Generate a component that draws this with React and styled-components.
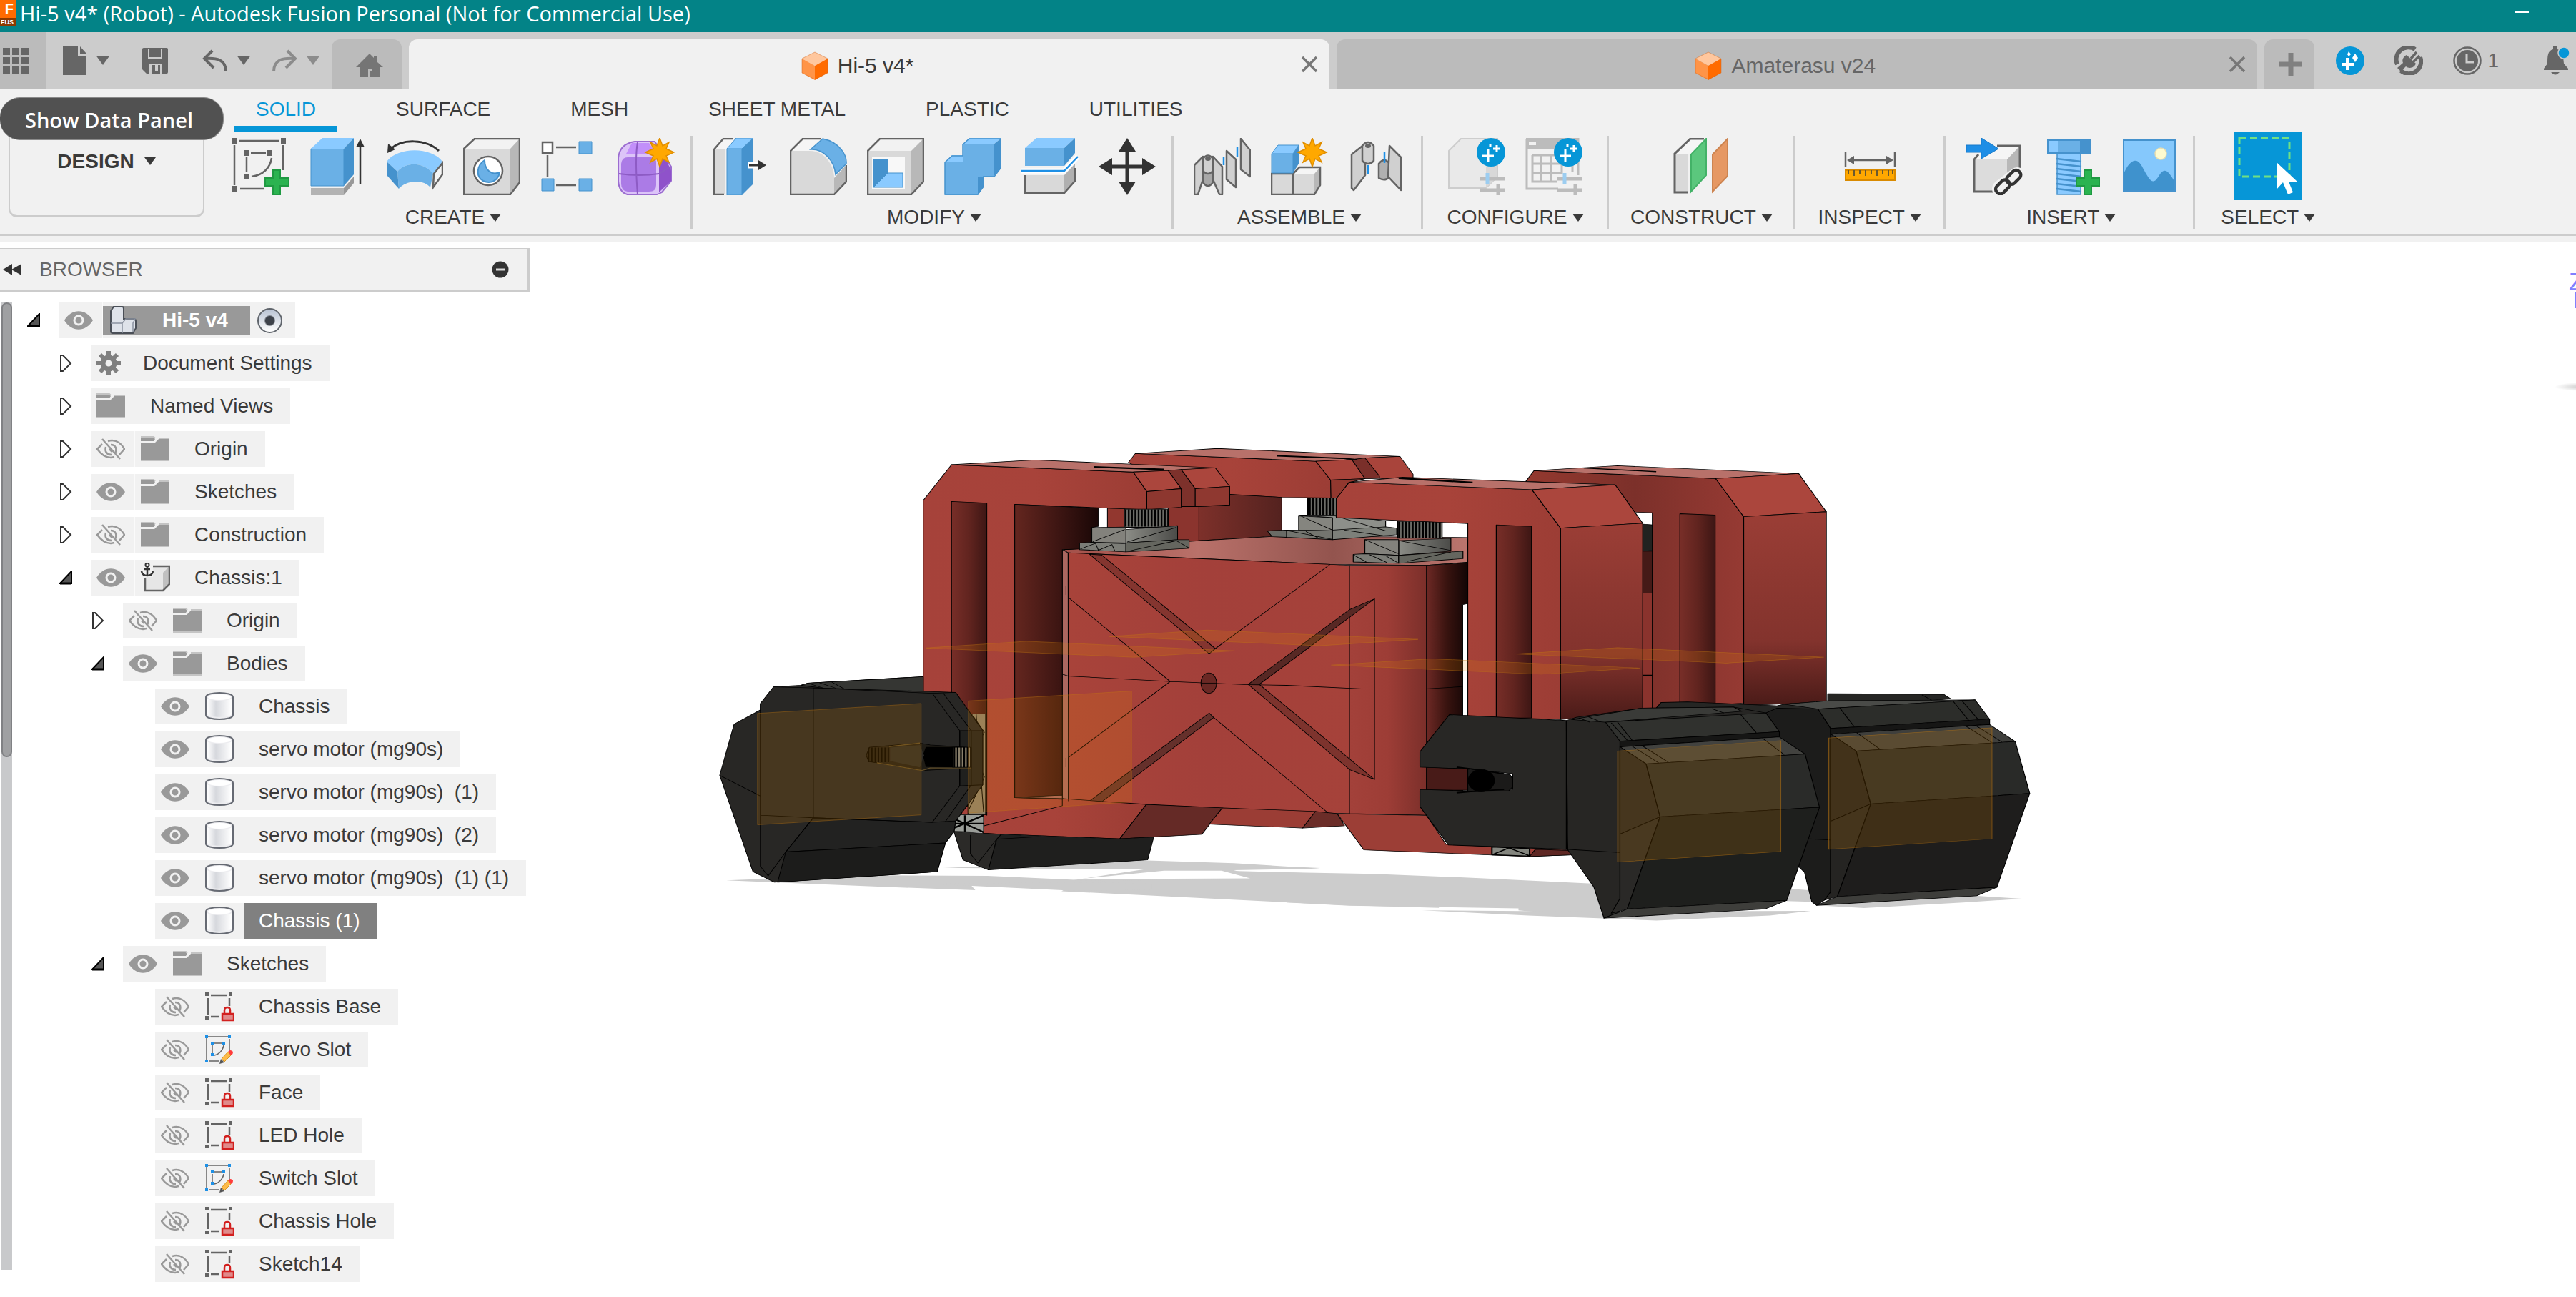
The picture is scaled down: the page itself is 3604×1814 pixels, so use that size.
import React from 'react';
import styled, { createGlobalStyle, css } from 'styled-components';

const GlobalStyle = createGlobalStyle`
    * {
        box-sizing: border-box;
    }
    body {
        margin: 0;
        background: #fff;
        color: #3a3a3a;
        font-family: 'Liberation Sans', Arial, sans-serif;
        font-size: 28px;
        overflow-x: hidden;
    }
    button {
        margin: 0;
        padding: 0;
        border: 0;
        background: none;
        color: inherit;
        font: inherit;
        cursor: pointer;
    }
    svg {
        display: block;
        flex: none;
    }
`;

const Page = styled.div`
    min-height: 100vh;
    display: flex;
    flex-direction: column;
`;

/* ---------- title bar ---------- */

const TitleBar = styled.header`
    height: 45px;
    display: flex;
    justify-content: space-between;
    background: #038387;
    color: #fff;
    font-family: 'Open Sans', sans-serif;
`;

const TitleName = styled.h1`
    display: flex;
    align-items: flex-start;
    gap: 6px;
    margin: 0;
    font-size: 29px;
    font-weight: 400;
    line-height: 38px;
    white-space: nowrap;
`;

const AppBadge = styled.span`
    width: 22px;
    height: 37px;
    display: flex;
    flex-direction: column;
    align-items: flex-end;
    overflow: hidden;
    background: linear-gradient(#ff6b00 25px, #8c3a00 25px);
    padding-right: 3px;
    font: bold 20px/25px 'Liberation Sans', sans-serif;

    small {
        font-size: 9px;
        line-height: 12px;
    }
`;

const Minimise = styled.button`
    width: 152px;
    height: 34px;
    padding: 15px 66px;

    &::before {
        content: '';
        display: block;
        width: 20px;
        height: 2px;
        background: #fff;
    }
`;

/* ---------- document tabs ---------- */

const TabStrip = styled.div`
    height: 80px;
    display: flex;
    background: #ccc;
    color: #666;
`;

const QuickBar = styled.div`
    display: flex;
    align-items: center;
    padding: 0 17px 0 20px;
    gap: 44px;
`;

const QuickGroup = styled.div`
    display: flex;
    align-items: center;
    gap: 28px;
`;

const QuickButton = styled.button`
    display: flex;
    align-items: center;
    gap: 11px;
    color: ${props => (props.$faded ? '#8c8c8c' : '#666')};
`;

const GridButton = styled.button`
    width: 64px;
    padding-left: 2px;
    background: #bbb;
`;

const DocTabs = styled.nav`
    flex: 1;
    display: flex;
    align-items: flex-end;
    gap: 10px;
`;

const tabShape = css`
    height: 70px;
    border-radius: 12px 12px 0 0;
    background: ${props => (props.$active ? '#f1f1f1' : '#bbb')};
    color: ${props => (props.$active ? '#3a3a3a' : '#666')};
`;

const SmallTab = styled.button`
    ${tabShape}
    width: ${props => props.$width}px;
    padding-left: ${props => props.$inset || 0}px;
    display: flex;
    align-items: center;
    justify-content: center;
    color: #808080;
`;

const DocTab = styled.div`
    ${tabShape}
    flex: 1;
    display: flex;
    align-items: center;
    font-size: 30px;
`;

const DocName = styled.button`
    flex: 1;
    display: flex;
    align-items: center;
    justify-content: center;
    gap: 12px;
    padding: 4px 0 0 8px;
`;

const CloseButton = styled.button`
    width: 28px;
    margin-right: 14px;
    color: #777;
`;

const StatusIcons = styled.div`
    display: flex;
    align-items: center;
    padding: 0 8px 0 30px;
    gap: 42px;
`;

const StatusButton = styled.button`
    display: flex;
    align-items: center;
    gap: 8px;
    margin-right: ${props => (props.$wide ? 18 : 0)}px;
`;

/* ---------- ribbon ---------- */

const Ribbon = styled.div`
    position: relative;
    display: flex;
    gap: 10px;
    height: 205px;
    padding-left: 12px;
    background: #f1f1f1;
    border-bottom: 3px solid #ccc;
`;

const RibbonEdge = styled.div`
    height: 8px;
    background: #f1f1f1;
`;

const Workspace = styled.button`
    width: 274px;
    height: 130px;
    margin-top: 49px;
    padding-bottom: 26px;
    border: 2px solid #ccc;
    border-bottom-width: 3px;
    border-radius: 12px;
    display: flex;
    align-items: center;
    justify-content: center;
    gap: 14px;
    font-weight: 700;
`;

const Tooltip = styled.div`
    position: absolute;
    left: 0;
    top: 11px;
    height: 60px;
    padding: 0 42px 0 35px;
    border: 1px solid #8a8a8a;
    border-left: 0;
    border-radius: 28px;
    background: #515151;
    color: #fff;
    font: 600 29px/62px 'Open Sans', sans-serif;
    white-space: nowrap;
`;

const RibbonBody = styled.div`
    flex: 1;
`;

const ModeTabs = styled.nav`
    display: flex;
    gap: 52px;
    height: 59px;
    padding-left: 32px;
`;

const ModeTab = styled.button`
    padding: 4px 30px 0;
    border-bottom: 8px solid ${props => (props.$active ? '#0696d7' : 'transparent')};
    color: ${props => (props.$active ? '#0696d7' : 'inherit')};
    line-height: 40px;
    white-space: nowrap;
`;

const ToolGroups = styled.div`
    display: flex;
    margin-top: 6px;
`;

const ToolGroup = styled.section`
    height: 130px;
    min-width: ${props => props.$minWidth || 0}px;
    display: flex;
    flex-direction: column;
    align-items: center;
    justify-content: space-between;
    padding: 0 ${props => (props.$narrow ? 29 : 22)}px 0 ${props =>
    props.$narrow ? 30 : 28}px;
    border-right: ${props => (props.$last ? 0 : 3)}px solid #ccc;
`;

const ToolRow = styled.div`
    height: 86px;
    display: flex;
    align-items: center;
    gap: 28px;
`;

const ToolButton = styled.button`
    ${props =>
        props.$active &&
        css`
            background: #0696d7;
            margin: -8px 0 -6px;
        `}
`;

const MenuButton = styled.button`
    display: flex;
    align-items: center;
    gap: 7px;
    line-height: 32px;
    white-space: nowrap;
`;

/* ---------- browser panel ---------- */

const Workbench = styled.main`
    flex: 1;
    display: flex;
    align-items: flex-start;
`;

const BrowserPanel = styled.aside`
    width: 741px;
    flex: none;
    padding-top: 9px;
`;

const BrowserHeader = styled.header`
    height: 61px;
    display: flex;
    align-items: center;
    gap: 24px;
    padding: 0 26px 0 4px;
    background: #f1f1f1;
    border: solid #ccc;
    border-width: 1px 3px 3px 0;
    color: #666;

    h2 {
        flex: 1;
        margin: 0;
        font-size: 28px;
        font-weight: 400;
    }
`;

const BrowserBody = styled.div`
    display: flex;
    align-items: flex-start;
    margin-top: 15px;
`;

const ScrollTrack = styled.div`
    align-self: stretch;
    width: 15px;
    margin: 0 0 17px 2px;
    background: #c8c9cb;
`;

const ScrollThumb = styled.div`
    height: 47%;
    border: 2px solid #808184;
    border-radius: 8px;
    background: #9fa0a2;
`;

const Tree = styled.ul`
    display: flex;
    flex-direction: column;
    gap: 10px;
    margin: 0;
    padding: 0;
    list-style: none;
`;

const TreeRow = styled.li`
    height: 50px;
    display: flex;
    align-items: center;
    gap: 26px;
    padding-left: ${props => 21 + props.$level * 45}px;
`;

const Expander = styled.button`
    width: 18px;
    height: 30px;
    display: flex;
    align-items: center;
`;

const NodeBox = styled.div`
    height: 50px;
    display: flex;
    align-items: center;
    background: #f1f1f1;
`;

const NodeEye = styled.button`
    width: 62px;
    height: 50px;
    padding-left: 8px;
    border-right: 1px solid #fafafa;
`;

const NodeItem = styled.button`
    display: flex;
    align-items: center;
    height: ${props => (props.$root ? 40 : 50)}px;
    padding-right: ${props => (props.$root ? 7 : 0)}px;
    background: ${props => (props.$root ? '#999' : 'none')};
    color: ${props => (props.$root ? '#fff' : 'inherit')};
    font-weight: ${props => (props.$root ? 700 : 400)};
`;

const NodeIcon = styled.span`
    width: ${props => (props.$small ? 53 : 63)}px;
    padding-left: 7px;
`;

const NodeLabel = styled.span`
    height: 100%;
    display: flex;
    align-items: center;
    padding: 0 24px 0 20px;
    white-space: pre;
    ${props =>
        props.$selected &&
        css`
            background: #808080;
            color: #fff;
        `}
`;

const ActiveRadio = styled.input`
    appearance: none;
    width: 35px;
    height: 35px;
    margin: 0 18px 0 10px;
    border: 2px solid #60656c;
    border-radius: 50%;
    background: radial-gradient(circle, #3d424b 6px, transparent 8px),
        linear-gradient(#b9c3d4, #fff);
`;

const Viewport = styled.section`
    flex: 1;
    min-width: 0;

    svg {
        width: 100%;
        height: auto;
    }
`;

/* ---------- icons ---------- */

const LIGHT = '#8acaff';
const BLUE = '#6ab0e6';
const DEEP = '#4592cd';
const INK = '#646464';

const Icon = ({ size = 80, box = 80, children }) => (
    <svg
        width={size}
        height={size}
        viewBox={`0 0 ${box} ${box}`}
        fill="none"
        aria-hidden="true"
    >
        {children}
    </svg>
);

const Caret = ({ width = 16, height = 11 }) => (
    <svg width={width} height={height} viewBox="0 0 16 11" aria-hidden="true">
        <path d="M0 0H16L8 11Z" fill="currentColor" />
    </svg>
);

const Star = ({ x, y }) => (
    <path
        transform={`translate(${x} ${y})`}
        d="M0-20L4-9L13-14L9-5L20 0L9 5L13 14L4 9L0 20L-4 9L-13 14L-9 5L-20 0L-9-5L-13-14L-4-9Z"
        fill="#ffa800"
        stroke="#e08e00"
        strokeWidth="1.5"
    />
);

const GreenPlus = ({ x = 46, y = 44 }) => (
    <path
        transform={`translate(${x} ${y})`}
        d="M12 1H22V12H34V23H22V35H12V23H1V12H12Z"
        fill="#2bb350"
        stroke="#1f9a42"
        strokeWidth="2"
    />
);

const SketchIcon = () => (
    <Icon>
        <path d="M11 4H67M4 10V66M12 71H46M72 10V45M27 21H48M21 27V48M28 54C44 52 54 42 56 28" stroke={INK} strokeWidth="2.5" />
        <path d="M1 0h7v8H1zM69 0h7v8h-7zM1 67h7v8H1zM18 17h7v8h-7zM50 17h7v8h-7zM18 50h7v8h-7z" fill={INK} />
        <GreenPlus />
    </Icon>
);

const ExtrudeIcon = () => (
    <Icon>
        <path d="M3 70H49V80H3Z" fill="#b3b3b3" />
        <path d="M49 70L63 54V63L49 80Z" fill="#999" />
        <path d="M3 15H49V67H3Z" fill={BLUE} stroke={DEEP} strokeWidth="1" />
        <path d="M3 15L19 0H63L49 15Z" fill={LIGHT} />
        <path d="M49 15L63 0V51L49 67Z" fill={DEEP} />
        <path d="M72 65V8" stroke="#333" strokeWidth="2.5" />
        <path d="M66 13L72 1L78 13Z" fill="#333" />
    </Icon>
);

const RevolveIcon = () => (
    <Icon>
        <path d="M7 15C22 1 56 1 74 18" stroke="#333" strokeWidth="3" />
        <path d="M2 21L3 8L13 16Z" fill="#333" />
        <path d="M1 33C16 12 64 12 79 33L66 50C52 33 28 33 16 47Z" fill={LIGHT} />
        <path d="M16 47C28 33 52 33 66 50L62 69C52 57 28 59 18 71Z" fill={BLUE} />
        <path d="M1 33L16 47L18 71L2 53Z" fill={DEEP} />
        <path d="M67 50L79 35V51L66 69Z" fill="#f5f5f5" stroke={INK} strokeWidth="2.5" />
    </Icon>
);

const HoleIcon = () => (
    <Icon>
        <path d="M1 15L16 1H79L66 15Z" fill="#f2f2f2" />
        <path d="M66 15L79 1V62L66 79Z" fill="#b8b8b8" />
        <path d="M1 15H66V79H1Z" fill="#d9d9d9" />
        <path d="M1 15L16 1H79V62L66 79H1Z" stroke={INK} strokeWidth="2.5" />
        <circle cx="35" cy="46" r="20" fill="#fff" stroke={INK} strokeWidth="2.5" />
        <path d="M30 31C30 44 39 53 51 48C49 60 38 65 28 60C17 54 19 38 30 31Z" fill={BLUE} stroke={DEEP} strokeWidth="2" />
    </Icon>
);

const PatternIcon = () => (
    <Icon>
        <path d="M22 13H50M10 24V55M22 66H50" stroke={INK} strokeWidth="2.5" />
        <path d="M3 6h14v15H3z" fill="#fff" stroke={INK} strokeWidth="2.5" />
        <path d="M54 5h18v17H54zM2 57h17v17H2zM54 57h18v17H54z" fill={BLUE} stroke={DEEP} strokeWidth="1" />
    </Icon>
);

const FormIcon = () => (
    <Icon>
        <path d="M1 28Q3 8 24 5H52L75 40V60L62 76Q55 80 48 80H18Q2 78 1 60Z" fill="#dcc4f8" stroke="#9b6cd0" strokeWidth="2" />
        <path d="M20 7H44L54 22H12Z" fill="#c28ffa" />
        <path d="M58 30H68L75 46V60L58 76Z" fill="#8f52ca" />
        <path d="M14 27H46Q54 27 54 35V66Q54 75 44 75H14Q5 74 5 64V36Q6 27 14 27Z" fill="#ab7be6" />
        <path d="M28 6Q24 28 28 79M2 50Q30 54 58 50L74 40" stroke="#8d5bc4" strokeWidth="2" />
        <Star x="59" y="20" />
    </Icon>
);

const PressPullIcon = () => (
    <Icon>
        <path d="M2 16L15 1H31L18 16Z" fill="#f5f5f5" />
        <path d="M2 16H17V79H2Z" fill="#d9d9d9" />
        <path d="M28 1H15L2 16V79H16" stroke={INK} strokeWidth="2.5" />
        <path d="M20 15H41V80H20Z" fill={BLUE} stroke={DEEP} />
        <path d="M20 15L33 0H57L41 15Z" fill={LIGHT} stroke={DEEP} />
        <path d="M41 15L57 0V64L41 80Z" fill={DEEP} />
        <path d="M50 38H66" stroke="#fff" strokeWidth="9" />
        <path d="M51 38H66" stroke="#333" strokeWidth="3" />
        <path d="M64 31L75 38L64 45Z" fill="#333" />
    </Icon>
);

const FilletIcon = () => (
    <Icon>
        <path d="M1 18L18 1H43L28 18Z" fill="#f5f5f5" />
        <path d="M1 18H28C50 18 62 40 62 56V79H1Z" fill="#d9d9d9" />
        <path d="M62 56L79 38V61L62 79Z" fill="#b8b8b8" />
        <path d="M43 1H18L1 18V79H62L79 61V38" stroke={INK} strokeWidth="2.5" />
        <path d="M29 16L46 1C70 6 80 24 79 36L64 51C62 32 48 15 29 16Z" fill={BLUE} stroke={DEEP} strokeWidth="1.5" />
    </Icon>
);

const ShellIcon = () => (
    <Icon>
        <path d="M1 18L18 1H79L62 18Z" fill="#f2f2f2" />
        <path d="M62 18L79 1V61L62 79Z" fill="#b8b8b8" />
        <path d="M1 18H62V79H1Z" fill="#d9d9d9" />
        <path d="M1 18L18 1H79V61L62 79H1Z" stroke={INK} strokeWidth="2.5" />
        <path d="M7 27H53V72H7Z" fill="#f8f8f8" />
        <path d="M9 29H29V49L9 69Z" fill={DEEP} />
        <path d="M9 69L29 49H50V69Z" fill={LIGHT} stroke={DEEP} />
    </Icon>
);

const CombineIcon = () => (
    <Icon>
        <path d="M1 34H26V9H69V54H54L47 80H1Z" fill={BLUE} />
        <path d="M1 34L11 24H26V34ZM26 9L35 0H80L69 9Z" fill={LIGHT} />
        <path d="M69 9L80 0V42L69 54ZM47 80V54H55V68Z" fill={DEEP} />
        <path d="M1 34L11 25H26V9L35 1H79V42L70 54H55V68L47 79H1Z" stroke={DEEP} strokeWidth="1.5" />
    </Icon>
);

const SplitIcon = () => (
    <Icon>
        <path d="M5 52H60V77H5Z" fill="#d9d9d9" />
        <path d="M60 52L75 36V60L60 77Z" fill="#b0b0b0" />
        <path d="M5 52V77H60L75 60V42" stroke={INK} strokeWidth="2.5" />
        <path d="M5 14H60V39H5Z" fill={BLUE} />
        <path d="M5 14L21 0H75L60 14Z" fill={LIGHT} />
        <path d="M60 14L75 0V21L60 39Z" fill={DEEP} />
        <path d="M0 46H60L79 26" stroke="#fff" strokeWidth="7" />
        <path d="M0 46H60L79 26" stroke="#1e90e6" strokeWidth="2.5" />
    </Icon>
);

const MoveIcon = () => (
    <Icon>
        <path d="M40 14V66M14 40H66" stroke="#333" strokeWidth="5" />
        <path d="M40 0L52 19H28ZM40 80L52 61H28ZM0 40L19 28V52ZM80 40L61 28V52Z" fill="#333" />
    </Icon>
);

const JointIcon = () => (
    <Icon>
        <g fill="#d0d0d0" stroke={INK} strokeWidth="2.5" strokeLinejoin="round">
            <path d="M66 1L79 17V54L66 44Z" />
            <path d="M46 18L59 30V69L46 58Z" />
            <path d="M13 28H27V62Q20 72 13 62Z" fill="#a8a8a8" />
            <path d="M1 79V38L13 26V58L6 79Z" />
            <path d="M27 26L40 40V79H36L27 58Z" />
            <path d="M13 29Q20 20 27 29V46Q20 54 13 46Z" />
        </g>
        <ellipse cx="20" cy="29" rx="4" ry="3" fill={INK} />
        <path d="M42 27V38M61 12V26" stroke="#1e90e6" strokeWidth="2.5" />
    </Icon>
);

const ComponentIcon = () => (
    <Icon>
        <path d="M1 50H31V79H1Z" fill="#d9d9d9" stroke={INK} strokeWidth="2.5" />
        <path d="M31 50L40 41H69L61 50Z" fill="#f5f5f5" />
        <path d="M61 50L69 41V66L61 79Z" fill="#b8b8b8" />
        <path d="M31 50H61V79H31Z" fill="#d9d9d9" />
        <path d="M31 79V50L40 41H69V66L61 79H31" stroke={INK} strokeWidth="2.5" />
        <path d="M1 22H31V49H1Z" fill={BLUE} stroke={DEEP} />
        <path d="M1 22L10 10H39L31 22Z" fill={LIGHT} stroke={DEEP} />
        <path d="M31 22L39 10V36L31 49Z" fill={DEEP} />
        <Star x="58" y="20" />
    </Icon>
);

const AsBuiltIcon = () => (
    <Icon>
        <g fill="#d0d0d0" stroke={INK} strokeWidth="2.5" strokeLinejoin="round">
            <path d="M5 23L24 8V52L8 73L5 70Z" />
            <path d="M20 11Q28 1 36 11V32Q28 40 20 32Z" />
            <path d="M43 36Q51 26 58 36V55Q51 61 43 56Z" fill="#b0b0b0" />
            <path d="M58 11L74 27V73L56 54Z" />
        </g>
        <ellipse cx="28" cy="11" rx="4" ry="3" fill={INK} />
        <path d="M28 38V51M51 20V35" stroke="#1e90e6" strokeWidth="2.5" />
    </Icon>
);

const ConfigMarks = () => (
    <>
        <path d="M45 57H80M45 73H80M70 65V80" stroke="#bcbcbc" strokeWidth="5" />
        <path d="M55 49V65" stroke="#9ccdf0" strokeWidth="5" />
        <circle cx="60" cy="20" r="20" fill="#0696d7" />
        <path d="M56 16V33M48 25H64M68 10V20M63 15H73M59 8V12" stroke="#fff" strokeWidth="3" />
    </>
);

const ConfigureIcon = () => (
    <Icon>
        <path d="M1 18L18 1H69V54L53 70H1Z" fill="#e9e9e9" stroke="#cdcdcd" strokeWidth="2" />
        <path d="M53 18L69 1V54L53 70Z" fill="#d8d8d8" />
        <ConfigMarks />
    </Icon>
);

const TableIcon = () => (
    <Icon>
        <path d="M2 1H74V52M2 1V71H46" stroke="#bcbcbc" strokeWidth="3" />
        <path d="M1 0H75V15H1Z" fill="#bcbcbc" />
        <path d="M5 5H15V10H5Z" fill="#f1f1f1" />
        <path d="M10 24H66V48M10 24V61H44M10 36H66M10 49H50M22 24V61M36 24V61M51 24V50" stroke="#bcbcbc" strokeWidth="3" />
        <ConfigMarks />
    </Icon>
);

const ConstructIcon = () => (
    <Icon>
        <path d="M3 22L25 1H48L25 22Z" fill="#f5f5f5" />
        <path d="M3 22H22V76H3Z" fill="#d9d9d9" />
        <path d="M44 1H25L3 22V76H22" stroke={INK} strokeWidth="3" />
        <path d="M26 23L47 1V52L26 75Z" fill="#5bc77d" stroke="#43b267" strokeWidth="2" />
        <path d="M56 23L77 1V53L56 75Z" fill="#e69863" stroke="#cd8450" strokeWidth="2" />
    </Icon>
);

const MeasureIcon = () => (
    <Icon>
        <path d="M6 20V41M75 20V41M12 31H69" stroke={INK} strokeWidth="2.5" />
        <path d="M8 31L18 25V37ZM73 31L63 25V37Z" fill={INK} />
        <path d="M6 45H75V59H6Z" fill="#ffa800" stroke="#d98a00" strokeWidth="2" />
        <path d="M10 45V51M18 45V53M26 45V51M34 45V53M42 45V51M50 45V53M58 45V51M66 45V53M72 45V51" stroke="#6b5a30" strokeWidth="2" />
    </Icon>
);

const InsertIcon = () => (
    <Icon>
        <path d="M12 30L28 11H76L58 30Z" fill="#f5f5f5" />
        <path d="M58 30L76 11V58L58 74Z" fill="#b8b8b8" />
        <path d="M12 30H58V74H12Z" fill="#dcdcdc" />
        <path d="M44 11H76V48M18 23L12 30V75H40" stroke={INK} strokeWidth="3" />
        <path d="M1 10H22V0L46 15L22 29V20H1Z" fill="#1e8ee6" stroke="#1779c8" />
        <path d="M49 71L72 53" stroke="#f1f1f1" strokeWidth="24" strokeLinecap="round" />
        <g stroke="#333" strokeWidth="4.5">
            <rect x="-12" y="-7" width="22" height="13" rx="6" transform="translate(53 68) rotate(-45)" />
            <rect x="-10" y="-7" width="22" height="13" rx="6" transform="translate(67 56) rotate(-45)" />
        </g>
    </Icon>
);

const BoltIcon = () => (
    <Icon>
        <path d="M20 22H53V79H20Z" fill={LIGHT} stroke={DEEP} strokeWidth="1.5" />
        <path d="M19 29L54 33M19 36L54 40M19 43L54 47M19 50L54 54M19 57L54 61M19 64L54 68M19 71L54 75" stroke={DEEP} strokeWidth="2.5" />
        <path d="M7 3H67V21H7Z" fill={BLUE} stroke={DEEP} strokeWidth="2" />
        <path d="M8 4H21V20H8Z" fill={LIGHT} />
        <path d="M52 4H66V20H52Z" fill={DEEP} />
        <GreenPlus />
    </Icon>
);

const ImageIcon = () => (
    <Icon>
        <path d="M5 3H77V74H5Z" fill="#85c8fc" />
        <path d="M5 50C14 30 24 25 32 42C42 60 46 68 55 52C62 40 68 46 77 62V74H5Z" fill="#3f92cd" />
        <path d="M5 3H77V74H5Z" stroke={DEEP} strokeWidth="2" />
        <circle cx="57" cy="22" r="8" fill="#fdfbd0" stroke="#e6ddb0" strokeWidth="1.5" />
    </Icon>
);

const SelectIcon = () => (
    <Icon size={95} box={95}>
        <path d="M7 8H77V62H7Z" stroke="#6fe084" strokeWidth="3" strokeDasharray="10 5" />
        <path d="M59 42V80L68 70L75 87L82 84L76 69H88Z" fill="#fff" />
    </Icon>
);

const GridIcon = () => (
    <Icon size={40} box={40}>
        <path
            d="M2 2h10v10H2zM15 2h10v10H15zM28 2h10v10H28zM2 15h10v10H2zM15 15h10v10H15zM28 15h10v10H28zM2 28h10v10H2zM15 28h10v10H15zM28 28h10v10H28z"
            fill="#666"
        />
    </Icon>
);

const FileIcon = () => (
    <Icon size={40} box={40}>
        <path d="M4 0H25V14H37V40H4ZM28 0L37 10H28Z" fill="currentColor" />
    </Icon>
);

const SaveIcon = () => (
    <Icon size={40} box={40}>
        <path
            fillRule="evenodd"
            d="M2 4Q2 2 4 2H36Q38 2 38 4V36Q38 38 36 38H8L2 32ZM10 3V17H30V3H28V15H12V3ZM12 38H15V26H20V35H24V26H27V38H29V24H12Z"
            fill="currentColor"
        />
    </Icon>
);

const UndoIcon = ({ flip }) => (
    <Icon size={40} box={40}>
        <g transform={flip ? 'matrix(-1 0 0 1 40 0)' : undefined} stroke="currentColor" strokeWidth="4">
            <path d="M16 6L5 17L18 30" />
            <path d="M6 17C22 16 35 18 35 35" />
        </g>
    </Icon>
);

const HomeIcon = () => (
    <Icon size={40} box={40}>
        <path fillRule="evenodd" d="M20 5L26 11V8H31V17L39 24H34V38H24V27H18V38H6V24H1ZM20 29H23V38H20Z" fill="#757575" />
    </Icon>
);

const CubeIcon = () => (
    <Icon size={40} box={40}>
        <path d="M20 1L38 10L20 20L2 10Z" fill="#ffc79e" />
        <path d="M2 10L20 20V40L2 30Z" fill="#ff9447" />
        <path d="M38 10L20 20V40L38 30Z" fill="#ff6b00" />
        <path d="M20 1L38 10V30L20 39L2 30V10Z" stroke="#d26a24" strokeOpacity=".5" />
    </Icon>
);

const CloseIcon = () => (
    <Icon size={28} box={28}>
        <path d="M4 4L24 24M24 4L4 24" stroke="currentColor" strokeWidth="3.5" />
    </Icon>
);

const PlusIcon = () => (
    <Icon size={32} box={32}>
        <path d="M16 0V32M0 16H32" stroke="currentColor" strokeWidth="7" />
    </Icon>
);

const AssistIcon = () => (
    <Icon size={40} box={40}>
        <circle cx="20" cy="20" r="20" fill="#0696d7" />
        <path d="M16 16V33M8 25H25" stroke="#fff" strokeWidth="4" />
        <path d="M27 10L31 16L27 22L23 16ZM18 7L21 11L18 14L16 11Z" fill="#fff" />
    </Icon>
);

const ExtensionIcon = () => (
    <Icon size={40} box={40}>
        <path d="M29 4A17 17 0 0 0 4 25M9 34A17 17 0 0 0 36 15" stroke="#666" strokeWidth="6" />
        <path d="M31 8L23 17M35 13L27 21" stroke="#666" strokeWidth="3.5" />
        <path d="M17 12L30 24C27 31 20 31 16 28L9 35L4 30L12 23C10 18 13 14 17 12Z" fill="#666" />
    </Icon>
);

const ClockIcon = () => (
    <Icon size={40} box={40}>
        <circle cx="20" cy="20" r="18.5" stroke="#666" strokeWidth="2.5" />
        <circle cx="20" cy="20" r="15" fill="#666" />
        <path d="M19 10V22H29" stroke="#ccc" strokeWidth="3" />
    </Icon>
);

const BellIcon = () => (
    <Icon size={40} box={40}>
        <path d="M16 0H22V4C30 6 30 14 31 24L37 31V33H3V31L8 24C8 14 8 6 16 4ZM13 36H25Q19 43 13 36Z" fill="#666" />
        <circle cx="31" cy="9" r="8" fill="#0696d7" stroke="#ccc" strokeWidth="1.5" />
    </Icon>
);

const EyeIcon = ({ off }) =>
    off ? (
        <Icon size={40} box={40}>
            <g stroke="#999" strokeWidth="2.5">
                <path d="M8 13L1 20C6 27 12 32 20 32L25 31M16 9C26 6 34 11 39 20L32 28" />
                <path d="M13 17C11 24 15 28 21 28M20 14C27 14 29 20 26 26M18 20L22 24" />
                <path d="M8 6L33 34" />
            </g>
        </Icon>
    ) : (
        <Icon size={40} box={40}>
            <path d="M0 20C10 3 30 3 40 20C30 37 10 37 0 20Z" fill="#999" />
            <circle cx="20" cy="20" r="6" stroke="#f1f1f1" strokeWidth="3" />
        </Icon>
    );

const FolderIcon = () => (
    <Icon size={42} box={42}>
        <path d="M1 5H19L21 7L19 10H1ZM1 13H20L26 7H41V36H1Z" fill="#999" />
        <path d="M1 4H19L21 6M26 6H41M1 37H41" stroke="#c4c4c4" strokeWidth="2" />
    </Icon>
);

const GearIcon = () => (
    <Icon size={36} box={36}>
        <circle cx="18" cy="18" r="8" stroke="#808080" strokeWidth="7" />
        <path
            d="M18 1V8M18 28V35M1 18H8M28 18H35M6 6L11 11M25 25L30 30M30 6L25 11M11 25L6 30"
            stroke="#808080"
            strokeWidth="6"
        />
    </Icon>
);

const AssemblyIcon = () => (
    <Icon size={42} box={42}>
        <path d="M4 8L8 2H20Q22 2 22 5V19H36Q39 19 39 22V32L35 39H7Q4 39 4 36Z" fill="#dfe3ea" stroke="#4a4f57" strokeWidth="2" />
        <path d="M4 25H20V39M20 25L25 19H38L35 25V38" stroke="#8b92a0" strokeWidth="1.5" />
    </Icon>
);

const AnchorIcon = () => (
    <Icon size={42} box={42}>
        <path d="M7 13L17 4H41V30L33 39H7Z" fill="#e6e6e6" />
        <path d="M32 14L41 5V30L32 39Z" fill="#c0c0c0" />
        <path d="M18 5H41V30L32 39H7V22" stroke={INK} strokeWidth="2.5" />
        <path d="M0 0H18V20H0Z" fill="#f1f1f1" />
        <circle cx="10" cy="3" r="2.5" stroke="#333" strokeWidth="2" />
        <path d="M10 5V18M6 9H14M2 12Q3 18 10 18Q17 18 18 12" stroke="#333" strokeWidth="2.5" />
    </Icon>
);

const BodyIcon = () => (
    <Icon size={42} box={42}>
        <path d="M2 8C2 0 40 0 40 8V33C40 41 2 41 2 33Z" fill="#ededf0" stroke="#666a73" strokeWidth="2" />
        <path d="M4 10C8 14 34 14 38 10V32C34 37 8 37 4 32Z" fill="url(#body-shade)" />
        <ellipse cx="21" cy="8" rx="16" ry="4" fill="#fff" />
        <defs>
            <linearGradient id="body-shade">
                <stop offset="0" stopColor="#fff" />
                <stop offset=".35" stopColor="#d6d8dd" />
                <stop offset="1" stopColor="#fff" />
            </linearGradient>
        </defs>
    </Icon>
);

const LockedSketchIcon = () => (
    <Icon size={42} box={42}>
        <path d="M9 5H31M5 9V32M9 35H20M35 9V20" stroke={INK} strokeWidth="2.5" />
        <path d="M1 1h5v5H1zM34 1h5v5h-5zM1 34h5v5H1z" fill={INK} />
        <path d="M28 31V26Q28 22 32 22Q36 22 36 26V31" stroke="#d2201f" strokeWidth="2.5" />
        <path d="M25 31H41V40H25Z" fill="#e08a8a" stroke="#d2201f" strokeWidth="2.5" />
    </Icon>
);

const EditSketchIcon = () => (
    <Icon size={42} box={42}>
        <path d="M4 3H34M3 5V36M6 37H20M35 6V24M14 12H27M11 15V27M14 29C20 28 26 22 27 15" stroke={INK} strokeWidth="1.5" />
        <path d="M1 1h4v4H1zM33 1h4v4h-4zM1 35h4v4H1zM9 10h4v4H9zM25 10h4v4h-4zM9 26h4v4H9z" fill="#1e90e6" />
        <path d="M24 34L33 24L37 29L28 38Z" fill="#fdbb4a" stroke="#d8951f" />
        <path d="M33 24Q36 20 40 24Q40 28 37 29Z" fill="#ff3b3b" />
        <path d="M23 34L28 39L21 41Z" fill="#555" />
    </Icon>
);

const nodeIcons = {
    folder: FolderIcon,
    gear: GearIcon,
    assembly: AssemblyIcon,
    anchor: AnchorIcon,
    body: BodyIcon,
    locked: LockedSketchIcon,
    edit: EditSketchIcon
};

const ExpanderIcon = ({ open }) =>
    open ? (
        <svg width="18" height="20" viewBox="0 0 18 20" aria-hidden="true">
            <path d="M17 1V18H1Z" fill="#555" stroke="#000" strokeWidth="2" />
            <path d="M1 18H17" stroke="#000" strokeWidth="3" />
        </svg>
    ) : (
        <svg width="18" height="24" viewBox="0 0 18 24" aria-hidden="true">
            <path d="M2 1H5L16 12L5 23H2Z" fill="#fff" stroke="#333" strokeWidth="2" />
        </svg>
    );

/* ---------- model drawing ---------- */

// The two halves of the model are drawn in their own units.
const LEFT = 'translate(980 600) scale(0.57397 0.44643)';
const RIGHT = 'translate(1800 600) scale(0.67602 0.45918)';

const Facets = ({ list }) =>
    list.map(([points, fill]) => (
        <polygon key={points} points={points} fill={fill} />
    ));

const groundLeft = [
    ['880,1448 925,1415 1090,1388 1225,1382 1429,1389 1800,1410 1800,1500 1568,1492', '#ccc'],
    ['62,1414 400,1398 700,1400 1005,1418 880,1424 660,1430 670,1445 400,1432', '#ccc'],
    ['592,1375 1090,1352 1300,1360 1510,1377 1300,1382 1350,1400 1280,1412 900,1415 1080,1380', '#ccc'],
    ['560,1425 900,1420 1100,1424 1100,1444 900,1446', '#ccc'],
    ['920,1410 1130,1384 1270,1384 1340,1408', '#fff']
];

const groundRight = [
    ['0,1350 180,1355 400,1368 640,1385 660,1490 480,1466 480,1460 130,1452 0,1442', '#ccc'],
    ['280,1466 640,1470 1085,1468 1000,1482 765,1497 500,1482', '#ccc'],
    ['1035,1400 1085,1405 1085,1440 1035,1438', '#ccc'],
    ['1097,1451 1430,1422 1522,1431 1400,1442 1195,1459', '#ccc'],
    ['0,1333 70,1337 0,1341', '#ccc']
];

const rearArm = [
    ['1043,105 1060,77 1500,101 1536,160 1537,216 1417,214 1290,206 1172,190', 'url(#arm)'],
    ['1060,77 1260,61 1705,86 1620,91 1588,96 1500,101', '#b8716a'],
    ['1215,243 1290,238 1290,205 1417,214 1417,335 1215,350', 'url(#inner-rear)'],
    ['1140,240 1215,243 1215,352 1160,352 1140,300', '#8b342e'],
    ['992,248 1034,250 1034,309 992,309', '#92372f'],
    ['1500,101 1588,96 1620,156 1536,160', '#a9443b'],
    ['1588,96 1620,91 1655,144 1655,155 1620,156', '#7a2f2a'],
    ['1620,91 1705,86 1737,142 1737,165 1655,155 1655,148', '#a9443b'],
    ['1536,160 1620,156 1580,168 1553,216 1537,216', '#92382f']
];

const rearServo = [
    ['25,265 95,270 95,310 25,308', '#85857f'],
    ['25,262 103,262 205,280 205,310 95,308 95,270', '#8d8f8a'],
    ['0,308 95,310 95,337 0,330', '#74756f'],
    ['95,308 205,298 228,302 228,322 95,337', '#7d807a'],
    ['-40,310 0,308 0,330 -30,328', '#6a6b66']
];

const chassis = [
    ['885,378 1215,350 1417,335 1870,340 1870,417 1770,427 1535,424 896,388', 'url(#deck)'],
    ['896,388 1535,424 1582,427 1582,1205 1530,1203 897,1166', 'url(#front)'],
    ['1582,427 1770,427 1770,1210 1582,1205', 'url(#round)'],
    ['1770,427 1858,420 1870,417 1870,547 1858,550 1858,1205 1770,1210', 'url(#shade)'],
    ['882,378 896,388 897,1166 882,1157', '#ab6760'],
    ['948,392 978,395 1255,688 1240,704', '#84352f'],
    ['1240,890 1251,904 978,1168 948,1166', '#65302b'],
    ['1335,800 1582,566 1643,532 1362,800', '#572824'],
    ['1335,800 1362,800 1643,1098 1582,1067', '#7d332d']
];

const belly = [
    ['640,1190 882,1158 1087,1176 1022,1284 690,1267', 'url(#arm)'],
    ['1087,1176 1272,1187 1222,1270 1022,1284', '#652a26'],
    ['1240,1238 1272,1187 1500,1198 1468,1250', '#9b3d35'],
    ['1499,1198 1552,1205 1570,1243 1468,1250', '#6b2d28']
];

const frontLeftLeg = [
    ['543,224 612,112 1055,135 1088,196 1088,253 766,236 766,1155 882,1158 882,1180 640,1260 612,830 543,830', 'url(#arm)'],
    ['612,112 815,97 1255,122 1140,130 1055,135', '#b8716a'],
    ['612,227 698,232 698,1210 612,1160', 'url(#slot)'],
    ['766,236 970,248 970,305 954,309 954,357 924,360 924,376 882,378 882,1160 766,1155', 'url(#slot-deep)'],
    ['768,1154 882,1147 882,1158', '#a9665f'],
    ['1055,135 1140,130 1172,187 1088,196', '#ab463d'],
    ['1088,196 1172,187 1172,245 1088,253', '#8d372f'],
    ['1140,130 1172,127 1206,187 1206,243 1172,243 1172,187', '#7d312b'],
    ['1172,127 1255,122 1290,180 1206,187', '#ab463d'],
    ['1206,187 1290,180 1290,238 1206,243', '#8f3830']
];

const frontLeftServo = [
    ['1037,315 1163,303 1163,347 1037,357', 'url(#servo)'],
    ['954,309 1037,307 1037,357 954,355', '#83827c'],
    ['924,357 954,355 1037,360 1037,385 924,378', '#7c7d77'],
    ['1037,357 1163,347 1191,347 1191,374 1037,385', '#65665f']
];

const rearFootLeft = [
    ['618,1262 700,1267 733,1270 722,1285 702,1381 640,1350', '#2b2a28'],
    ['733,1270 1020,1284 1105,1278 1090,1350 702,1381 722,1285', '#1f1f1e']
];

const frontFootLeft = [
    ['47,1085 82,925 146,880 146,860 178,808 245,803 262,796 543,776 543,822 622,825 688,945 688,1115 622,1228 618,1262 597,1297 577,1387 180,1420 128,1387', '#282725'],
    ['245,803 262,796 543,776 543,822 300,812', '#353633'],
    ['275,1218 565,1232 622,1228 618,1262 597,1297 208,1325', '#222221'],
    ['208,1325 597,1297 577,1387 188,1420', '#1c1c1b'],
    ['632,945 688,945 688,1115 632,1118', '#20201e'],
    ['404,1022 412,997 535,984 560,990 660,998 660,1062 540,1070 430,1046 410,1042', '#1f1c16'],
    ['543,1022 550,997 615,997 615,1060 550,1058', '#000']
];

const rearLegRight = [
    ['495,160 512,127 888,151 946,267 946,835 757,852 757,255 720,253 680,170', 'url(#arm-dark)'],
    ['512,127 685,112 1060,136 888,151', '#b8716a'],
    ['814,258 887,262 887,835 814,835', 'url(#slot)'],
    ['888,151 1060,136 1117,252 946,267', '#ab463d'],
    ['946,267 1117,252 1117,832 946,842', 'url(#side)'],
    ['737,290 757,292 757,370 737,372', '#222220'],
    ['737,372 757,372 757,500 737,500', '#451a17'],
    ['737,500 757,500 757,852 737,860', '#8a332d']
];

const frontRightLeg = [
    ['103,212 130,162 508,185 567,302 567,885 375,875 375,288 103,270', 'url(#arm)'],
    ['130,162 240,147 680,170 508,185', '#b8716a'],
    ['434,292 507,297 507,880 434,880', 'url(#slot)'],
    ['508,185 680,170 737,287 567,302', '#ab463d'],
    ['567,302 737,287 737,862 567,885', 'url(#side)'],
    ['105,1172 290,1177 330,1265 585,1282 590,1297 500,1302 160,1282', '#9c3e36'],
    ['515,1280 590,1284 590,1297 503,1302', '#5e2723'],
    ['290,1030 375,1035 375,1100 290,1100', '#481b18']
];

const frontRightServo = [
    ['232,340 340,333 340,372 232,385', 'url(#servo)'],
    ['162,337 232,337 232,385 162,380', '#83827c'],
    ['138,382 162,380 232,385 232,409 138,405', '#7c7d77'],
    ['232,385 365,372 365,395 232,409', '#65665f']
];

const rearFootRight = [
    ['765,850 775,833 830,831 1015,843 1030,838 1120,828 1120,806 1360,808 1375,822 1140,850 1100,1000 1000,900', '#262624'],
    ['992,865 1015,850 1100,853 1126,912 1126,1410 1113,1435 1097,1451 1087,1440 1072,1350 1058,1330', '#1c1c1b'],
    ['1030,838 1120,828 1425,825 1100,853', '#4a4b48'],
    ['1100,853 1425,825 1455,884 1126,912', '#2c2d2a'],
    ['1126,912 1455,884 1455,900 1126,929', '#161615'],
    ['1126,929 1455,900 1508,952 1179,981', '#3f3f3c'],
    ['1126,929 1179,981 1209,1142 1126,1195', '#222120'],
    ['1126,1195 1209,1142 1140,1424 1113,1435 1126,1410', '#252422'],
    ['1179,981 1508,952 1538,1110 1209,1142', '#292a28'],
    ['1209,1142 1538,1110 1470,1396 1140,1424', '#1e1d1c'],
    ['1140,1424 1470,1396 1428,1422 1097,1451', '#3e3e3b']
];

const frontFootRight = [
    ['276,983 337,870 579,888 579,1280 335,1267 276,1150 276,1098 375,1102 468,1098 468,1050 375,1035 276,1030', '#282725'],
    ['375,1036 462,1052 468,1065 468,1090 460,1102 375,1105', '#1b1a19'],
    ['579,888 600,878 735,850 925,847 992,865 1020,923 690,968 690,1470 657,1490 636,1395 582,1282', '#272624'],
    ['590,885 735,850 925,847 942,860 660,893', '#3a3b38'],
    ['660,893 992,865 1020,922 690,951', '#30312e'],
    ['690,951 1020,922 1020,938 690,968', '#161615'],
    ['690,968 1020,938 1073,990 744,1020', '#42423f'],
    ['690,968 744,1020 773,1181 690,1234', '#272624'],
    ['690,1234 773,1181 705,1462 672,1475 690,1430', '#2a2927'],
    ['744,1020 1073,990 1103,1152 773,1181', '#2a2b29'],
    ['773,1181 1103,1152 1035,1436 705,1462', '#1e1f1d'],
    ['705,1462 1035,1436 990,1462 657,1490', '#3e3e3b']
];

const Gradient = ({ id, stops, vertical }) => (
    <linearGradient id={id} x2={vertical ? 0 : 1} y2={vertical ? 1 : 0}>
        {stops.map((color, i) => (
            <stop key={color} offset={i / (stops.length - 1)} stopColor={color} />
        ))}
    </linearGradient>
);

const ridges = (from, to, step, top, bottom) => {
    let d = '';
    for (let x = from; x <= to; x += step) {
        d += `M${x} ${top}V${bottom}`;
    }
    return d;
};

const RobotModel = () => (
    <svg viewBox="741 338 2863 1476" role="img" aria-label="Hi-5 v4">
        <defs>
            <Gradient id="arm" stops={['#a6423a', '#a8433a', '#9c3d35']} />
            <Gradient id="arm-dark" stops={['#94392f', '#7c302a', '#963a33']} />
            <Gradient id="inner-rear" stops={['#7d302a', '#54221f']} />
            <Gradient id="deck" stops={['#a35049', '#b9716a', '#93544e', '#bb756e']} />
            <Gradient id="front" stops={['#a8433a', '#a3403a', '#a6423a']} />
            <Gradient id="round" stops={['#a3413a', '#9d3d36', '#7b2f2a']} />
            <Gradient id="shade" stops={['#6e2925', '#38130f', '#120505']} />
            <Gradient id="slot" stops={['#782e28', '#61241f', '#3d1614']} />
            <Gradient id="slot-deep" stops={['#64261f', '#3f1613', '#190706']} />
            <Gradient id="servo" stops={['#8b8c86', '#4b4b48']} />
            <Gradient id="side" stops={['#9b3e36', '#8e3831', '#83332d', '#4a1b18']} vertical />
            <radialGradient id="cube-shadow">
                <stop offset="0" stopColor="#ccc" />
                <stop offset="1" stopColor="#fff" />
            </radialGradient>
        </defs>

        <g transform={LEFT}>
            <Facets list={groundLeft} />
        </g>
        <g transform={RIGHT}>
            <Facets list={groundRight} />
        </g>

        <g stroke="#000" strokeWidth="1.8" strokeLinejoin="round">
            <g transform={LEFT}>
                <Facets list={rearArm} />
                <path d="M1405 84L1568 92L1600 96" strokeWidth="4" />
                <path d="M1480 218H1552V272H1480Z" fill="#6b6b66" />
                <path d={ridges(1484, 1552, 8, 218, 272)} strokeWidth="4" />
            </g>
            <g transform={RIGHT}>
                <path d="M45 210H103V265H45Z" fill="#6b6b66" />
                <path d={ridges(48, 103, 7, 210, 265)} strokeWidth="4" />
            </g>
            <g transform={LEFT}>
                <Facets list={chassis} />
                <Facets list={belly} />
                <path
                    d="M897 388V528L1145 791L897 1029V1166M1255 688L1535 424M1251 904L1530 1203M1643 532V1098M882 768L897 774L1145 791L1335 801L1429 803L1611 814H1770L1858 807M891 490V520M891 1030V1060"
                    fill="none"
                />
                <ellipse cx="1239" cy="796" rx="19" ry="32" fill="#6a2824" />
                <path d="M1220 796H1258" />
                <Facets list={rearFootLeft} />
                <path d="M658 1272V1330L676 1360L722 1285L810 1278" fill="none" />
            </g>
            <g transform={RIGHT}>
                <Facets list={rearServo} />
                <path d="M28 264L95 308M98 264L205 310M0 309L95 336M40 312L68 334M120 308L200 325" />
                <Facets list={rearLegRight} />
                <path d="M615 119L765 130M737 750H757" strokeWidth="3" />
                <Facets list={frontRightServo} />
                <path d="M162 337L232 380M232 340L340 370M138 383L165 405M172 383L208 407M205 386L232 409M250 403L340 375" />
                <path d="M230 281H322V333H230Z" fill="#6b6b66" />
                <path d={ridges(233, 322, 7, 282, 333)} strokeWidth="4" />
                <Facets list={frontRightLeg} />
                <path d="M232 150L385 163" strokeWidth="5" />
                <path d="M425 1273L503 1278V1301L425 1297ZM425 1297L460 1276L503 1300" fill="#84867f" strokeWidth="3" />
            </g>
            <g transform={LEFT}>
                <Facets list={frontLeftLeg} />
                <path d="M960 119L1130 127" strokeWidth="5" />
                <path d="M1033 251H1140V308H1033Z" fill="#6b6b66" />
                <path d={ridges(1036, 1140, 8, 252, 306)} strokeWidth="4" />
                <Facets list={frontLeftServo} />
                <path d="M956 353L1034 315M1040 354L1160 308M926 376L963 358L970 380L1003 362L1010 382M1045 382L1160 350L1190 372" fill="none" />
                <path d="M662 893H695V1208H652V1180L670 1100Z" fill="#8c7f68" />
                <path d="M665 900L692 950L665 1010L692 1090L655 1190M672 893L690 1200" fill="none" />
                <path d="M600 1208H690V1263L600 1260Z" fill="#9b9e99" />
                <path d="M600 1210L690 1263M690 1210L600 1260M645 1210V1262M600 1236H690" strokeWidth="5" />
                <Facets list={frontFootLeft} />
                <path
                    d="M178 808L275 811L565 828L622 825M275 811V1218L146 1210M565 828L632 945V1118L565 1232L275 1218L208 1325L165 1400L146 1370V860M592 828L660 945V1115L597 1230M47 1085L146 1150M262 796L300 812M290 795L330 812M320 793L350 814"
                    fill="none"
                />
                <path d="M462 998L535 990L545 1022L535 1060L462 1040Z" fill="#2c2a26" stroke="none" />
                <path d={ridges(410, 460, 8, 998, 1044)} strokeWidth="3" />
                <path d="M460 995L535 984M430 1046L540 1070L560 1062H660" stroke="#5c4a28" strokeWidth="3" fill="none" />
                <path d="M615 997H658V1060H615Z" fill="#8a806c" />
                <path d={ridges(619, 658, 8, 997, 1060)} strokeWidth="4" />
            </g>
            <g transform={RIGHT}>
                <Facets list={rearFootRight} />
                <path d="M1145 850L1175 907M1380 830L1412 888M1398 828L1432 886M1180 925L1228 975M1405 904L1460 955M1425 902L1480 953M1080 1248L1126 1252M1315 810L1335 826" fill="none" />
                <Facets list={frontFootRight} />
                <path d="M672 895L705 948M685 893L715 948M940 870L972 925M715 966L770 1017M735 964L790 1015M985 942L1030 992M579 1280L690 1290M605 880L628 893M625 877L650 892M880 852L905 865" fill="none" />
                <path d="M352 1030L385 1036L450 1050M352 1108L385 1104L450 1098" fill="none" strokeWidth="4" />
                <ellipse cx="403" cy="1071" rx="27" ry="34" fill="#000" />
            </g>
        </g>

        <g fill="rgb(235, 145, 0)" fillOpacity=".16" stroke="#c47a10" strokeOpacity=".5" strokeWidth="1.5">
            <g transform={LEFT}>
                <polygon points="139,891 538,860 538,1209 139,1240" />
                <polygon points="653,852 1051,821 1051,1168 653,1203" />
                <polygon points="549,686 795,665 1302,695 1056,715" />
                <polygon points="997,650 1235,630 1749,659 1509,679" />
            </g>
            <g transform={RIGHT}>
                <polygon points="92,719 300,700 732,728 527,747" />
                <polygon points="473,685 685,666 1112,695 910,713" />
                <polygon points="685,981 1023,949 1023,1287 685,1319" />
                <polygon points="1122,941 1460,910 1460,1248 1122,1280" />
            </g>
        </g>

        <text x="3594" y="406" fill="#8080ff" fontSize="35" fontFamily="Liberation Sans, sans-serif">
            Z
        </text>
        <path d="M3604 409V431" stroke="#8080ff" strokeWidth="3" />
        <ellipse cx="3612" cy="541" rx="38" ry="6" fill="url(#cube-shadow)" />
    </svg>
);

/* ---------- data ---------- */

const modes = ['SOLID', 'SURFACE', 'MESH', 'SHEET METAL', 'PLASTIC', 'UTILITIES'];

const toolGroups = [
    {
        label: 'CREATE',
        tools: [
            ['Create Sketch', SketchIcon],
            ['Extrude', ExtrudeIcon],
            ['Revolve', RevolveIcon],
            ['Hole', HoleIcon],
            ['Rectangular Pattern', PatternIcon],
            ['Create Form', FormIcon]
        ]
    },
    {
        label: 'MODIFY',
        tools: [
            ['Press Pull', PressPullIcon],
            ['Fillet', FilletIcon],
            ['Shell', ShellIcon],
            ['Combine', CombineIcon],
            ['Split Body', SplitIcon],
            ['Move', MoveIcon]
        ]
    },
    {
        label: 'ASSEMBLE',
        tools: [
            ['Joint', JointIcon],
            ['New Component', ComponentIcon],
            ['As-built Joint', AsBuiltIcon]
        ]
    },
    {
        label: 'CONFIGURE',
        narrow: true,
        minWidth: 260,
        tools: [
            ['Configure', ConfigureIcon],
            ['Configuration Table', TableIcon]
        ]
    },
    {
        label: 'CONSTRUCT',
        narrow: true,
        minWidth: 260,
        tools: [['Offset Plane', ConstructIcon]]
    },
    {
        label: 'INSPECT',
        narrow: true,
        minWidth: 210,
        tools: [['Measure', MeasureIcon]]
    },
    {
        label: 'INSERT',
        tools: [
            ['Insert Derive', InsertIcon],
            ['Insert Fastener', BoltIcon],
            ['Canvas', ImageIcon]
        ]
    },
    {
        label: 'SELECT',
        narrow: true,
        minWidth: 204,
        last: true,
        tools: [['Select', SelectIcon, true]]
    }
];

const nodes = [
    { level: 0, label: 'Hi-5 v4', icon: 'assembly', eye: 'on', open: true, root: true },
    { level: 1, label: 'Document Settings', icon: 'gear', open: false },
    { level: 1, label: 'Named Views', icon: 'folder', open: false },
    { level: 1, label: 'Origin', icon: 'folder', eye: 'off', open: false },
    { level: 1, label: 'Sketches', icon: 'folder', eye: 'on', open: false },
    { level: 1, label: 'Construction', icon: 'folder', eye: 'off', open: false },
    { level: 1, label: 'Chassis:1', icon: 'anchor', eye: 'on', open: true },
    { level: 2, label: 'Origin', icon: 'folder', eye: 'off', open: false },
    { level: 2, label: 'Bodies', icon: 'folder', eye: 'on', open: true },
    { level: 3, label: 'Chassis', icon: 'body', eye: 'on' },
    { level: 3, label: 'servo motor (mg90s)', icon: 'body', eye: 'on' },
    { level: 3, label: 'servo motor (mg90s)  (1)', icon: 'body', eye: 'on' },
    { level: 3, label: 'servo motor (mg90s)  (2)', icon: 'body', eye: 'on' },
    { level: 3, label: 'servo motor (mg90s)  (1) (1)', icon: 'body', eye: 'on' },
    { level: 3, label: 'Chassis (1)', icon: 'body', eye: 'on', selected: true },
    { level: 2, label: 'Sketches', icon: 'folder', eye: 'on', open: true },
    { level: 3, label: 'Chassis Base', icon: 'locked', eye: 'off' },
    { level: 3, label: 'Servo Slot', icon: 'edit', eye: 'off' },
    { level: 3, label: 'Face', icon: 'locked', eye: 'off' },
    { level: 3, label: 'LED Hole', icon: 'locked', eye: 'off' },
    { level: 3, label: 'Switch Slot', icon: 'edit', eye: 'off' },
    { level: 3, label: 'Chassis Hole', icon: 'locked', eye: 'off' },
    { level: 3, label: 'Sketch14', icon: 'locked', eye: 'off' }
];

const TreeNode = ({ node, onSelect, selected }) => {
    const NodeGlyph = nodeIcons[node.icon];
    const hasChildren = node.open !== undefined;

    return (
        <TreeRow $level={node.level}>
            <Expander
                as={hasChildren ? 'button' : 'span'}
                aria-expanded={hasChildren ? node.open : undefined}
                aria-label={hasChildren ? `Toggle ${node.label}` : undefined}
            >
                {hasChildren && <ExpanderIcon open={node.open} />}
            </Expander>
            <NodeBox>
                {node.eye && (
                    <NodeEye aria-label={`Visibility of ${node.label}`}>
                        <EyeIcon off={node.eye === 'off'} />
                    </NodeEye>
                )}
                <NodeItem $root={node.root} onClick={onSelect}>
                    <NodeIcon $small={node.icon === 'gear'}>
                        <NodeGlyph />
                    </NodeIcon>
                    <NodeLabel $selected={selected}>{node.label}</NodeLabel>
                </NodeItem>
                {node.root && (
                    <ActiveRadio
                        type="radio"
                        name="active-component"
                        aria-label="Activate component"
                        defaultChecked
                    />
                )}
            </NodeBox>
        </TreeRow>
    );
};

const App = () => {
    const [mode, setMode] = React.useState('SOLID');
    const [selected, setSelected] = React.useState(
        nodes.findIndex(node => node.selected)
    );

    return (
        <Page>
            <GlobalStyle />
            <TitleBar>
                <TitleName>
                    <AppBadge aria-hidden="true">
                        F<small>FUS</small>
                    </AppBadge>
                    Hi-5 v4* (Robot) - Autodesk Fusion Personal (Not for Commercial
                    Use)
                </TitleName>
                <Minimise aria-label="Minimise" />
            </TitleBar>

            <TabStrip>
                <GridButton aria-label="Show Data Panel">
                    <GridIcon />
                </GridButton>
                <QuickBar>
                    <QuickButton aria-label="File">
                        <FileIcon />
                        <Caret width={18} height={12} />
                    </QuickButton>
                    <QuickButton aria-label="Save">
                        <SaveIcon />
                    </QuickButton>
                    <QuickGroup>
                        <QuickButton aria-label="Undo">
                            <UndoIcon />
                            <Caret width={18} height={12} />
                        </QuickButton>
                        <QuickButton aria-label="Redo" $faded>
                            <UndoIcon flip />
                            <Caret width={18} height={12} />
                        </QuickButton>
                    </QuickGroup>
                </QuickBar>
                <DocTabs>
                    <SmallTab $width={98} $inset={8} aria-label="Home">
                        <HomeIcon />
                    </SmallTab>
                    <DocTab $active>
                        <DocName>
                            <CubeIcon />
                            Hi-5 v4*
                        </DocName>
                        <CloseButton aria-label="Close Hi-5 v4">
                            <CloseIcon />
                        </CloseButton>
                    </DocTab>
                    <DocTab>
                        <DocName>
                            <CubeIcon />
                            Amaterasu v24
                        </DocName>
                        <CloseButton aria-label="Close Amaterasu v24">
                            <CloseIcon />
                        </CloseButton>
                    </DocTab>
                    <SmallTab $width={70} $inset={4} aria-label="New design">
                        <PlusIcon />
                    </SmallTab>
                </DocTabs>
                <StatusIcons>
                    <StatusButton aria-label="Assistant">
                        <AssistIcon />
                    </StatusButton>
                    <StatusButton aria-label="Extensions">
                        <ExtensionIcon />
                    </StatusButton>
                    <StatusButton $wide>
                        <ClockIcon />1
                    </StatusButton>
                    <StatusButton aria-label="Notifications">
                        <BellIcon />
                    </StatusButton>
                </StatusIcons>
            </TabStrip>

            <Ribbon>
                <Workspace>
                    DESIGN
                    <Caret />
                </Workspace>
                <Tooltip role="tooltip">Show Data Panel</Tooltip>
                <RibbonBody>
                    <ModeTabs>
                        {modes.map(name => (
                            <ModeTab
                                key={name}
                                $active={name === mode}
                                onClick={() => setMode(name)}
                            >
                                {name}
                            </ModeTab>
                        ))}
                    </ModeTabs>
                    <ToolGroups>
                        {toolGroups.map(group => (
                            <ToolGroup
                                key={group.label}
                                $narrow={group.narrow}
                                $minWidth={group.minWidth}
                                $last={group.last}
                            >
                                <ToolRow>
                                    {group.tools.map(([name, ToolIcon, active]) => (
                                        <ToolButton
                                            key={name}
                                            aria-label={name}
                                            $active={active}
                                        >
                                            <ToolIcon />
                                        </ToolButton>
                                    ))}
                                </ToolRow>
                                <MenuButton>
                                    {group.label}
                                    <Caret />
                                </MenuButton>
                            </ToolGroup>
                        ))}
                    </ToolGroups>
                </RibbonBody>
            </Ribbon>
            <RibbonEdge />

            <Workbench>
                <BrowserPanel>
                    <BrowserHeader>
                        <svg width="27" height="18" viewBox="0 0 27 18" aria-hidden="true">
                            <path d="M13 1V17L0 9ZM26 1V17L12 9Z" fill="#333" />
                        </svg>
                        <h2>BROWSER</h2>
                        <button aria-label="Collapse browser">
                            <Icon size={24} box={24}>
                                <circle cx="12" cy="12" r="11.5" fill="#333" />
                                <path d="M6 12H18" stroke="#ddd" strokeWidth="3" />
                            </Icon>
                        </button>
                    </BrowserHeader>
                    <BrowserBody>
                        <ScrollTrack>
                            <ScrollThumb />
                        </ScrollTrack>
                        <Tree>
                            {nodes.map((node, i) => (
                                <TreeNode
                                    key={`${node.level}-${node.label}`}
                                    node={node}
                                    selected={i === selected}
                                    onSelect={() => setSelected(i)}
                                />
                            ))}
                        </Tree>
                    </BrowserBody>
                </BrowserPanel>
                <Viewport>
                    <RobotModel />
                </Viewport>
            </Workbench>
        </Page>
    );
};

export default App;
